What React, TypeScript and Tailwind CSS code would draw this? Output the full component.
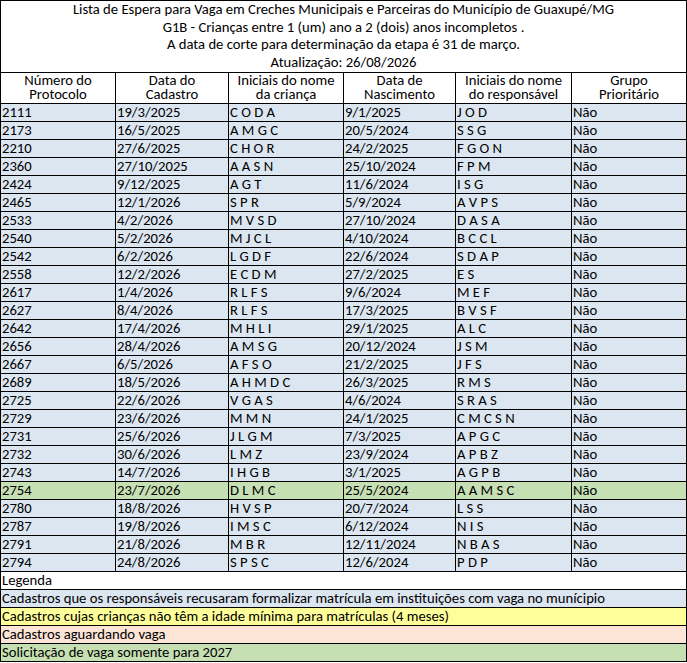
type Entry = {
  protocolo: string;
  cadastro: string;
  crianca: string;
  nascimento: string;
  responsavel: string;
  green?: boolean;
};

const rows: Entry[] = [
  { protocolo: "2111", cadastro: "19/3/2025", crianca: "C O D A", nascimento: "9/1/2025", responsavel: "J O D" },
  { protocolo: "2173", cadastro: "16/5/2025", crianca: "A M G C", nascimento: "20/5/2024", responsavel: "S S G" },
  { protocolo: "2210", cadastro: "27/6/2025", crianca: "C H O R", nascimento: "24/2/2025", responsavel: "F G O N" },
  { protocolo: "2360", cadastro: "27/10/2025", crianca: "A A S N", nascimento: "25/10/2024", responsavel: "F P M" },
  { protocolo: "2424", cadastro: "9/12/2025", crianca: "A G T", nascimento: "11/6/2024", responsavel: "I S G" },
  { protocolo: "2465", cadastro: "12/1/2026", crianca: "S P R", nascimento: "5/9/2024", responsavel: "A V P S" },
  { protocolo: "2533", cadastro: "4/2/2026", crianca: "M V S D", nascimento: "27/10/2024", responsavel: "D A S A" },
  { protocolo: "2540", cadastro: "5/2/2026", crianca: "M J C L", nascimento: "4/10/2024", responsavel: "B C C L" },
  { protocolo: "2542", cadastro: "6/2/2026", crianca: "L G D F", nascimento: "22/6/2024", responsavel: "S D A P" },
  { protocolo: "2558", cadastro: "12/2/2026", crianca: "E C D M", nascimento: "27/2/2025", responsavel: "E S" },
  { protocolo: "2617", cadastro: "1/4/2026", crianca: "R L F S", nascimento: "9/6/2024", responsavel: "M E F" },
  { protocolo: "2627", cadastro: "8/4/2026", crianca: "R L F S", nascimento: "17/3/2025", responsavel: "B V S F" },
  { protocolo: "2642", cadastro: "17/4/2026", crianca: "M H L I", nascimento: "29/1/2025", responsavel: "A L C" },
  { protocolo: "2656", cadastro: "28/4/2026", crianca: "A M S G", nascimento: "20/12/2024", responsavel: "J S M" },
  { protocolo: "2667", cadastro: "6/5/2026", crianca: "A F S O", nascimento: "21/2/2025", responsavel: "J F S" },
  { protocolo: "2689", cadastro: "18/5/2026", crianca: "A H M D C", nascimento: "26/3/2025", responsavel: "R M S" },
  { protocolo: "2725", cadastro: "22/6/2026", crianca: "V G A S", nascimento: "4/6/2024", responsavel: "S R A S" },
  { protocolo: "2729", cadastro: "23/6/2026", crianca: "M M N", nascimento: "24/1/2025", responsavel: "C M C S N" },
  { protocolo: "2731", cadastro: "25/6/2026", crianca: "J L G M", nascimento: "7/3/2025", responsavel: "A P G C" },
  { protocolo: "2732", cadastro: "30/6/2026", crianca: "L M Z", nascimento: "23/9/2024", responsavel: "A P B Z" },
  { protocolo: "2743", cadastro: "14/7/2026", crianca: "I H G B", nascimento: "3/1/2025", responsavel: "A G P B" },
  { protocolo: "2754", cadastro: "23/7/2026", crianca: "D L M C", nascimento: "25/5/2024", responsavel: "A A M S C", green: true },
  { protocolo: "2780", cadastro: "18/8/2026", crianca: "H V S P", nascimento: "20/7/2024", responsavel: "L S S" },
  { protocolo: "2787", cadastro: "19/8/2026", crianca: "I M S C", nascimento: "6/12/2024", responsavel: "N I S" },
  { protocolo: "2791", cadastro: "21/8/2026", crianca: "M B R", nascimento: "12/11/2024", responsavel: "N B A S" },
  { protocolo: "2794", cadastro: "24/8/2026", crianca: "S P S C", nascimento: "12/6/2024", responsavel: "P D P" },
];

const headers = [
  ["Número do", "Protocolo"],
  ["Data do", "Cadastro"],
  ["Iniciais do nome", "da criança"],
  ["Data de", "Nascimento"],
  ["Iniciais do nome", "do responsável"],
  ["Grupo", "Prioritário"],
];

const legend = [
  { text: "Legenda", bg: "bg-white" },
  { text: "Cadastros que os responsáveis recusaram formalizar matrícula em instituições com vaga no munícipio", bg: "bg-[#dce6f1]" },
  { text: "Cadastros cujas crianças não têm a idade mínima para matrículas (4 meses)", bg: "bg-[#ffff99]" },
  { text: "Cadastros aguardando vaga", bg: "bg-[#fce4d6]" },
  { text: "Solicitação de vaga somente para 2027", bg: "bg-[#c6e0b4]" },
];

const grid = "grid grid-cols-[115px_113px_115px_112px_116px_115px]";

export default function App() {
  return (
    <div className="w-[687px] bg-white text-[14.67px] text-black" style={{ fontFamily: "Carlito, 'Liberation Sans', sans-serif" }}>
      <div className="border-l border-t border-black">
        {/* title block */}
        <div className="flex h-[72px] flex-col items-center border-b border-r border-black leading-[17.5px]">
          <p>Lista de Espera para Vaga em Creches Municipais e Parceiras do Município de Guaxupé/MG</p>
          <p>G1B - Crianças entre 1 (um) ano a 2 (dois) anos incompletos .</p>
          <p>A data de corte para determinação da etapa é 31 de março.</p>
          <p>Atualização: 26/08/2026</p>
        </div>

        <div className={grid}>
          {headers.map((h) => (
            <div key={h[1]} className="h-[31px] border-b border-r border-black text-center leading-[14px]">
              {h[0]}
              <br />
              {h[1]}
            </div>
          ))}
        </div>

        {rows.map((r) => (
          <div key={r.protocolo} className={`${grid} ${r.green ? "bg-[#c6e0b4]" : "bg-[#dce6f1]"}`}>
            {[r.protocolo, r.cadastro, r.crianca, r.nascimento, r.responsavel, "Não"].map((c, i) => (
              <div key={i} className="h-[18px] overflow-hidden whitespace-pre border-b border-r border-black pl-[1px] leading-[17px]">
                {c}
              </div>
            ))}
          </div>
        ))}

        {legend.map((l) => (
          <div key={l.text} className={`h-[18px] border-b border-r border-black pl-[1px] leading-[17px] ${l.bg}`}>
            {l.text}
          </div>
        ))}
      </div>
    </div>
  );
}
